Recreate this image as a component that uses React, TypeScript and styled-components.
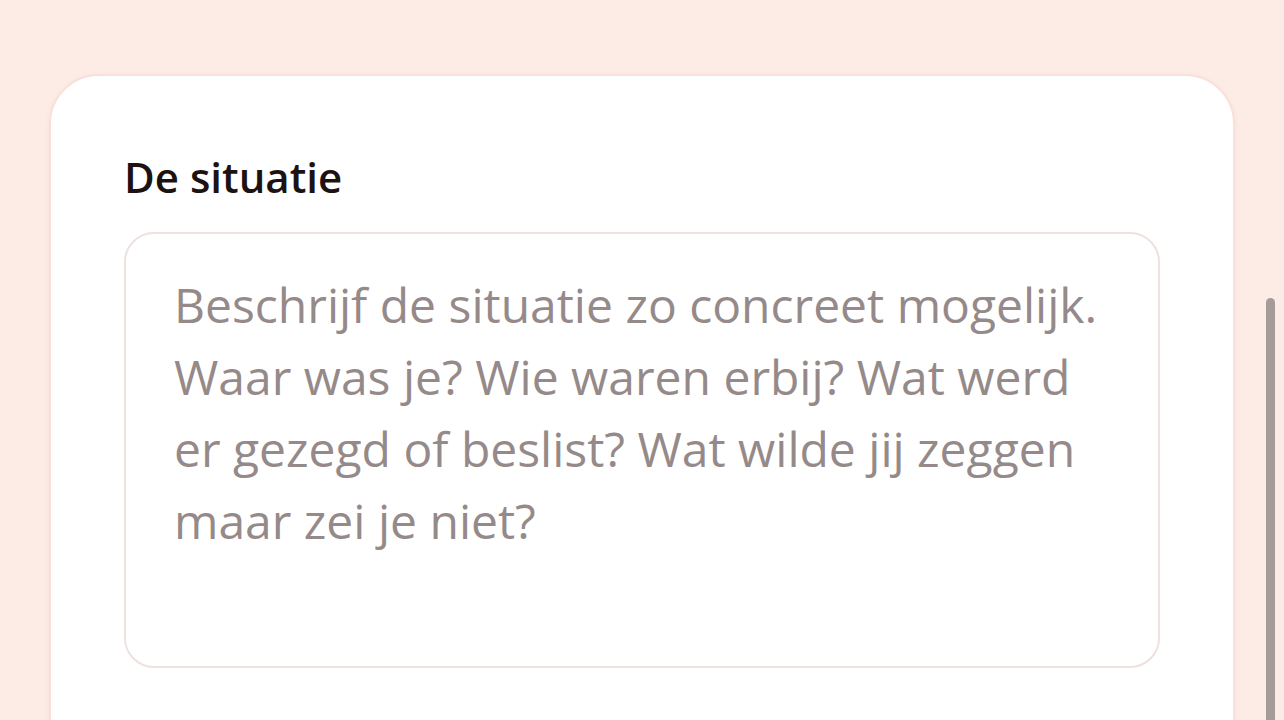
import React from "react";
import styled, { createGlobalStyle } from "styled-components";

const PLACEHOLDER =
  "Beschrijf de situatie zo concreet mogelijk.\nWaar was je? Wie waren erbij? Wat werd\ner gezegd of beslist? Wat wilde jij zeggen\nmaar zei je niet?";

function App() {
  return (
    <Page>
      <GlobalStyle />
      <Card>
        <Label htmlFor="situatie">De situatie</Label>
        <Field id="situatie" placeholder={PLACEHOLDER} />
      </Card>
      <ScrollThumb />
    </Page>
  );
}

export default App;

const GlobalStyle = createGlobalStyle`
  html, body {
    margin: 0;
    padding: 0;
    background: #fdece6;
    font-family: "Open Sans", "Noto Sans", sans-serif;
    overflow: hidden;
  }
`;

const Page = styled.div`
  min-height: 100vh;
  padding: 74px 49px 0;
  box-sizing: border-box;
`;

const Card = styled.div`
  display: flex;
  flex-direction: column;
  gap: 34px;
  height: 720px;
  padding: 80px 73px 0;
  box-sizing: border-box;
  background: #ffffff;
  border: 2px solid #f7e1da;
  border-radius: 50px;
  box-shadow: 0 2px 6px rgba(220, 170, 155, 0.16);
`;

const Label = styled.label`
  font-size: 42px;
  line-height: 42px;
  font-weight: 600;
  color: #1c1212;
`;

const Field = styled.textarea`
  display: block;
  width: 100%;
  height: 436px;
  box-sizing: border-box;
  padding: 35px 30px 0 48px;
  border: 2px solid #efe1dd;
  border-radius: 30px;
  background: #fff;
  resize: none;
  outline: none;
  font-family: "Open Sans", "Noto Sans", sans-serif;
  font-size: 48px;
  line-height: 72px;
  color: #3a2f2e;

  &::placeholder {
    color: #958a89;
    opacity: 1;
  }
`;

const ScrollThumb = styled.div`
  position: fixed;
  top: 298px;
  right: 9px;
  width: 9px;
  height: 440px;
  border-radius: 5px;
  background: #a59b99;
`;
